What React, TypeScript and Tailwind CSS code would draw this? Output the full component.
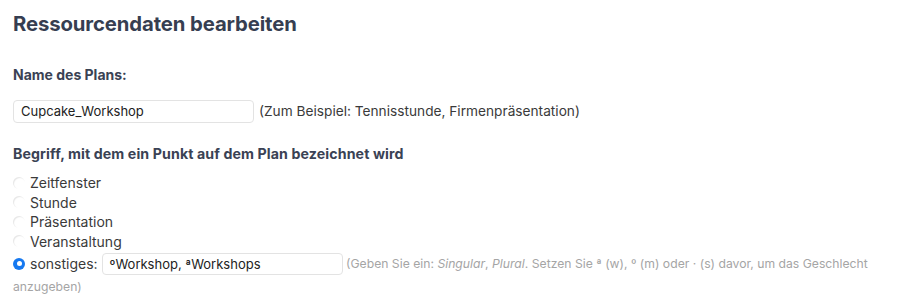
import React from "react";

const font = { fontFamily: "Inter, 'Noto Sans', sans-serif" };

function Radio({ checked }: { checked?: boolean }) {
  if (checked) {
    return (
      <span className="inline-flex h-[12px] w-[12px] shrink-0 items-center justify-center rounded-full bg-[#1679f0]">
        <span className="h-[5px] w-[5px] rounded-full bg-white" />
      </span>
    );
  }
  return (
    <span className="inline-block h-[12px] w-[12px] shrink-0 rounded-full bg-white shadow-[inset_1px_1px_1px_rgba(0,0,0,0.10)]" />
  );
}

export default function App() {
  const options = ["Zeitfenster", "Stunde", "Präsentation", "Veranstaltung"];
  return (
    <div className="min-h-[307px] w-[900px] bg-white pl-[13px] pr-[10px] text-[#333]" style={font}>
      <h1 className="pt-[10px] text-[20.3px] font-bold leading-[28px] tracking-[-0.1px] text-[#363e51]">
        Ressourcendaten bearbeiten
      </h1>
      <div className="mt-[27px] text-[14px] font-bold leading-[20px] text-[#3a4254]">Name des Plans:</div>
      <div className="mt-[15px] flex items-center">
        <div className="flex h-[23px] w-[241px] items-center rounded-[4px] border border-[#e3e3e3] px-[7px] text-[13px] text-[#222]">
          Cupcake_Workshop
        </div>
        <span className="ml-[5px] text-[13.7px] text-[#3a3a3a]">(Zum Beispiel: Tennisstunde, Firmenpräsentation)</span>
      </div>
      <div className="mt-[21px] text-[14.2px] font-bold leading-[20px] tracking-[0.1px] text-[#3a4254]">
        Begriff, mit dem ein Punkt auf dem Plan bezeichnet wird
      </div>
      <div className="mt-[9px] flex flex-col">
        {options.map((o) => (
          <div key={o} className="flex h-[19.5px] items-center gap-[5px] text-[14px] leading-[19.5px] text-[#3a3a3a]">
            <Radio />
            <span>{o}</span>
          </div>
        ))}
        <div className="mt-[1px] text-[12.2px] leading-[22px] text-[#a5a5a5]">
          <span className="inline-flex items-center gap-[5px] align-middle text-[14px] leading-[22px] text-[#3a3a3a]">
            <Radio checked />
            <span>sonstiges:</span>
          </span>
          <span className="ml-[4px] inline-flex h-[22px] w-[241px] items-center rounded-[4px] border border-[#e3e3e3] px-[7px] align-middle text-[13px] leading-[16px] text-[#222]">
            ºWorkshop, ªWorkshops
          </span>{" "}
          <span className="align-middle">
            (Geben Sie ein: <i>Singular</i>, <i>Plural</i>. Setzen Sie ª (w), º (m) oder · (s) davor, um das Geschlecht anzugeben)
          </span>
        </div>
      </div>
    </div>
  );
}
